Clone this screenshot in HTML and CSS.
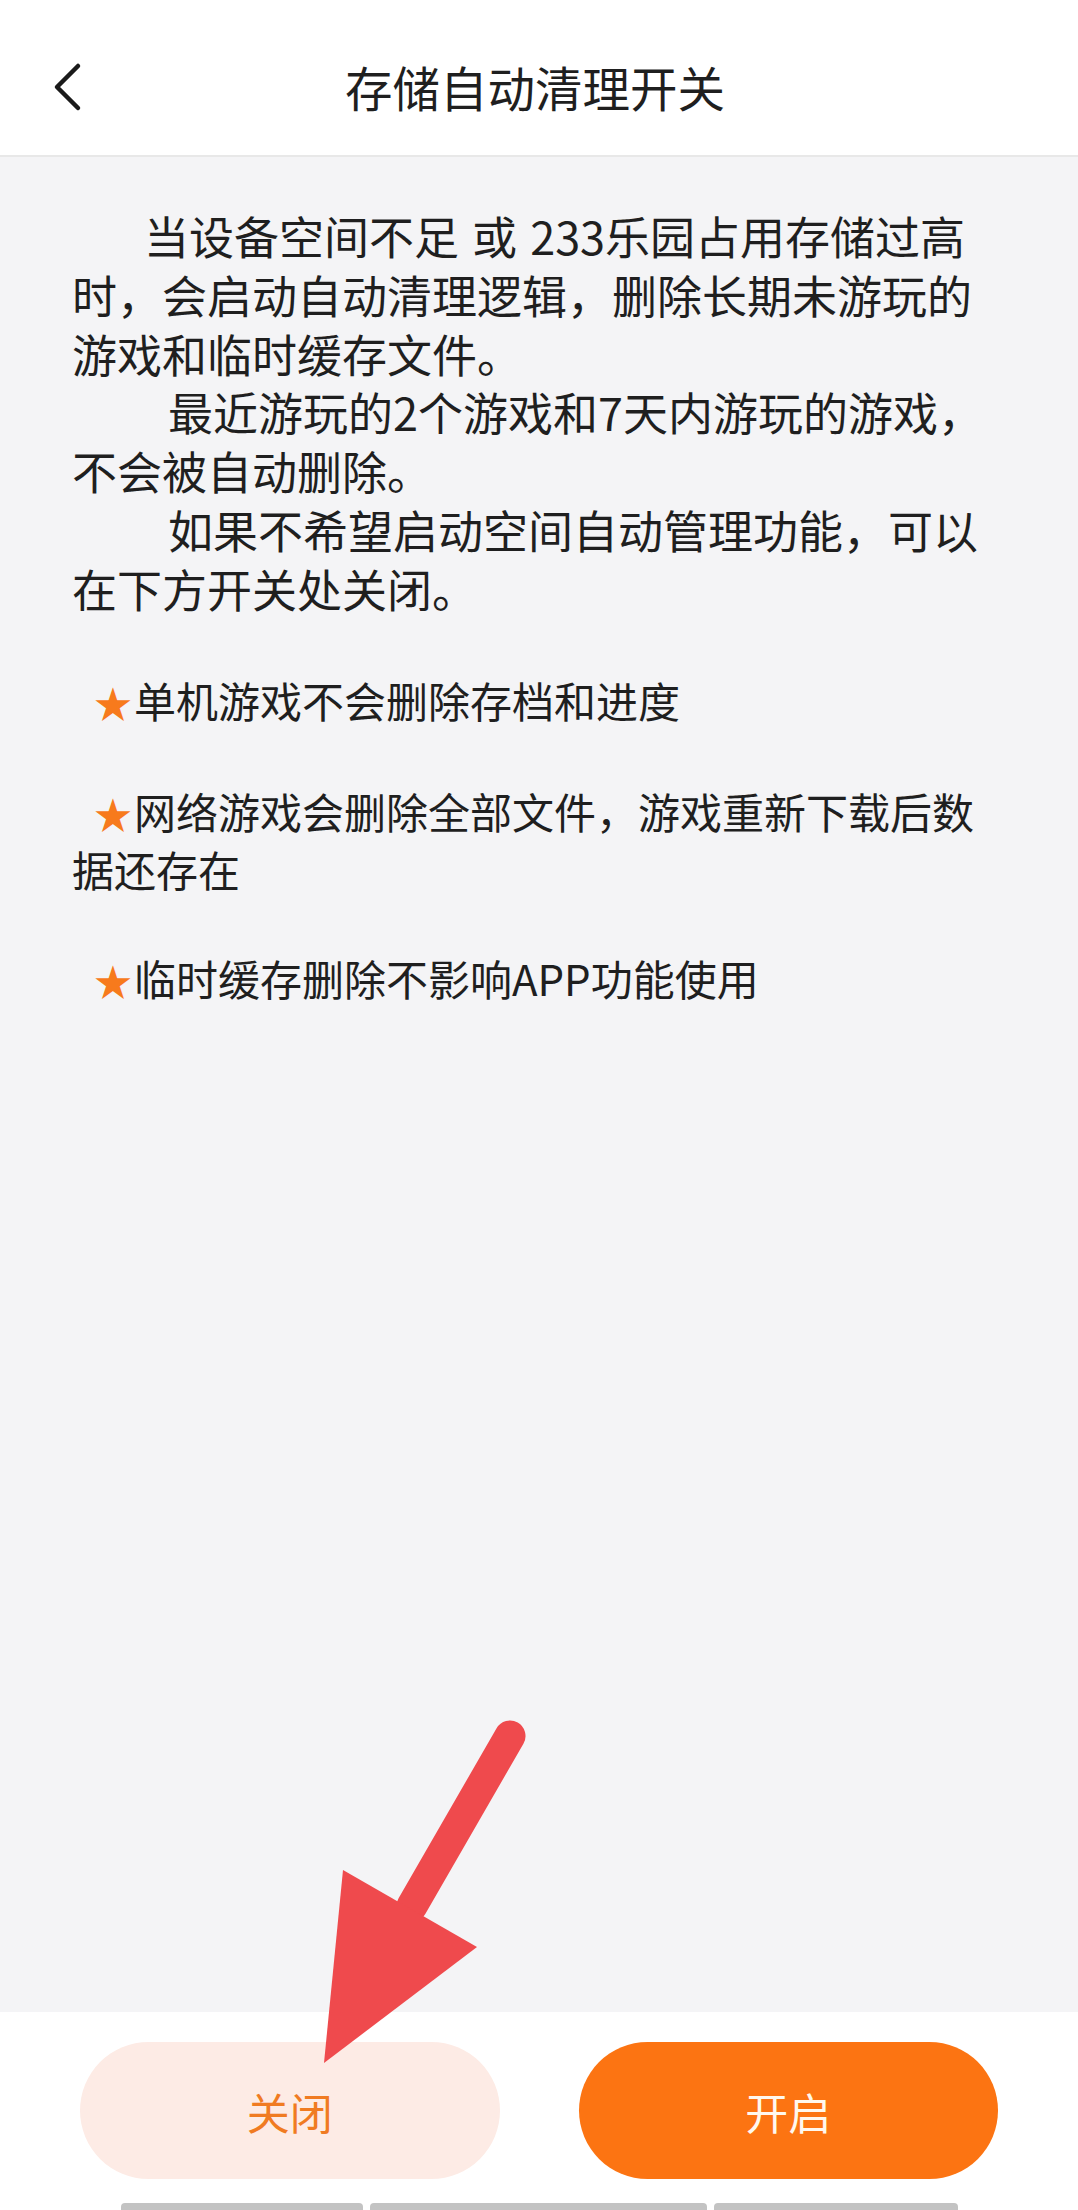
FILE: index.html
```html
<!DOCTYPE html>
<html lang="zh-CN">
<head>
    <meta charset="UTF-8">
    <title>存储自动清理开关</title>
    <link rel="stylesheet" href="styles.css">
</head>
<body>
    <div class="screen">
        <header class="topbar">
            <button class="back" aria-label="返回">
                <svg width="32" height="52" viewBox="0 0 32 52">
                    <polyline points="26,5 5,26 26,47" fill="none" stroke="#1a1a1a" stroke-width="4.5" stroke-linecap="round" stroke-linejoin="round"/>
                </svg>
            </button>
            <h1 class="title">存储自动清理开关</h1>
            <div></div>
        </header>

        <main class="content">
            <p class="intro first">当设备空间不足 或 233乐园占用存储过高<br>时，会启动自动清理逻辑，删除长期未游玩的<br>游戏和临时缓存文件。</p>
            <p class="intro">最近游玩的2个游戏和7天内游玩的游戏，<br>不会被自动删除。</p>
            <p class="intro">如果不希望启动空间自动管理功能，可以<br>在下方开关处关闭。</p>

            <ul class="notes">
                <li><span class="star">★</span>单机游戏不会删除存档和进度</li>
                <li><span class="star">★</span>网络游戏会删除全部文件，游戏重新下载后数<br>据还存在</li>
                <li><span class="star">★</span>临时缓存删除不影响APP功能使用</li>
            </ul>
        </main>

        <footer class="actions">
            <div class="buttons">
                <button class="btn btn-off">关闭</button>
                <button class="btn btn-on">开启</button>
            </div>
            <div class="handle">
                <span class="seg-a"></span>
                <span class="seg-b"></span>
                <span class="seg-c"></span>
            </div>
        </footer>

        <!-- annotation arrow drawn over the page -->
        <svg class="pointer" width="260" height="380" viewBox="0 0 260 380">
            <line x1="210" y1="36" x2="112" y2="206" stroke="#ef4a4d" stroke-width="31" stroke-linecap="round"/>
            <polygon points="43,170 177,247 24,363" fill="#ef4a4d"/>
        </svg>
    </div>
</body>
</html>
```

FILE: styles.css
```css
body {
    margin: 0;
    font-family: 'Noto Sans CJK SC', 'Noto Sans', sans-serif;
    background-color: #f4f4f6;
    color: #1f1f1f;
}
.screen {
    position: relative;
    height: 2210px;
    display: flex;
    flex-direction: column;
    overflow: hidden;
}
.topbar {
    flex: none;
    height: 157px;
    box-sizing: border-box;
    padding-top: 18px;
    background: #fff;
    border-bottom: 2px solid #e8e8e8;
    display: grid;
    grid-template-columns: 1fr auto 1fr;
    align-items: center;
}
.back {
    justify-self: start;
    margin-left: 52px;
    padding: 0;
    border: none;
    background: none;
    display: flex;
}
.title {
    margin: 0 8px 0 0;
    font-size: 47.5px;
    font-weight: 400;
    color: #1f1f1f;
    line-height: 60px;
}
.content {
    flex: 1;
    padding: 50px 30px 0 72px;
}
.intro {
    margin: 0;
    font-size: 45px;
    line-height: 58.8px;
    text-indent: 96px;
    word-spacing: 3px;
}
.intro.first {
    text-indent: 72px;
}
.notes {
    list-style: none;
    margin: 53px 0 0;
    padding: 0;
    font-size: 42px;
    line-height: 56px;
}
.notes li {
    text-indent: 22px;
}
.notes li + li {
    margin-top: 53px;
}
.star {
    display: inline-block;
    width: 40px;
    text-indent: 0;
    font-size: 38px;
    color: #f77a1c;
}
.actions {
    flex: none;
    height: 198px;
    box-sizing: border-box;
    padding-top: 30px;
    background: #fff;
}
.buttons {
    display: flex;
    gap: 79px;
    padding: 0 80px;
}
.btn {
    flex: 1;
    height: 137px;
    border: none;
    border-radius: 69px;
    font-family: inherit;
    font-size: 43px;
}
.btn-off {
    background: #fdebe5;
    color: #f07b22;
}
.btn-on {
    background: #fc7412;
    color: #fff8ee;
}
.handle {
    display: flex;
    gap: 7px;
    margin-top: 24px;
    padding-left: 121px;
}
.handle span {
    height: 10px;
    background: #c3c3c3;
    border-radius: 4px 4px 0 0;
}
.seg-a { width: 242px; }
.seg-b { width: 337px; }
.seg-c { width: 244px; }
.pointer {
    position: absolute;
    left: 300px;
    top: 1700px;
}
```
